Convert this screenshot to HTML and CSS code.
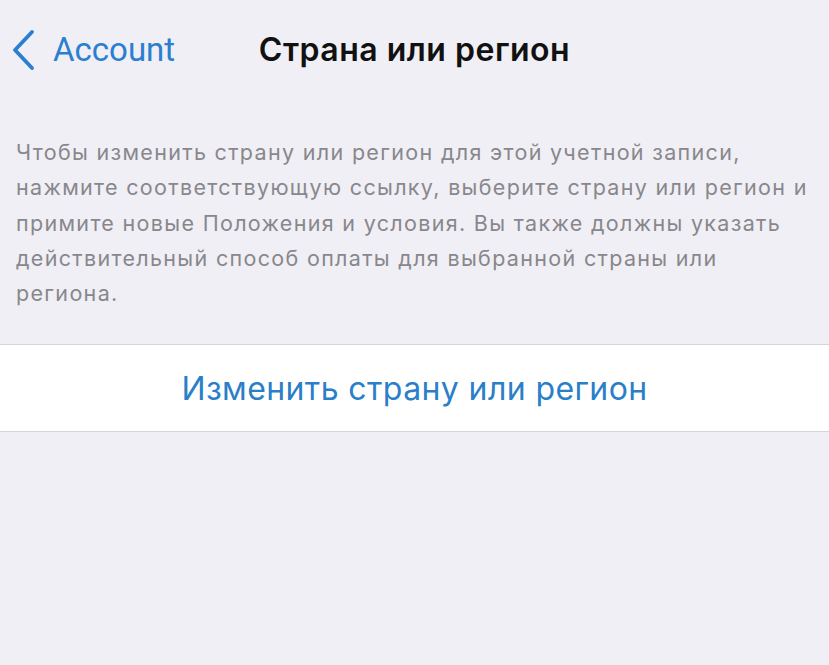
FILE: index.html
```html
<!DOCTYPE html>
<html lang="ru">
<head>
<meta charset="utf-8">
<title>Страна или регион</title>
<link rel="stylesheet" href="styles.css">
</head>
<body>
<header class="nav">
  <a class="back" href="#">
    <svg class="chev" width="26" height="42" viewBox="0 0 26 42" aria-hidden="true">
      <path d="M22 3 L5 21 L22 39" fill="none" stroke="#2a7fd0" stroke-width="3.8" stroke-linecap="round" stroke-linejoin="round"/>
    </svg>
    <span class="back-label">Account</span>
  </a>
  <h1 class="title">Страна или регион</h1>
  <div class="spacer"></div>
</header>
<main>
  <p class="info">Чтобы изменить страну или регион для этой учетной записи,<br>нажмите соответствующую ссылку, выберите страну или регион и<br>примите новые Положения и условия. Вы также должны указать<br>действительный способ оплаты для выбранной страны или<br>региона.</p>
  <div class="group">
    <a class="cell" href="#">Изменить страну или регион</a>
  </div>
</main>
</body>
</html>
```

FILE: styles.css
```css
html, body {
  margin: 0;
  padding: 0;
  background: #f0eff5;
  height: 100%;
}
body {
  font-family: Inter, Roboto, "Noto Sans", "DejaVu Sans", sans-serif;
  width: 829px;
  height: 665px;
  overflow: hidden;
}
.nav {
  display: grid;
  grid-template-columns: 1fr auto 1fr;
  align-items: center;
  height: 96px;
  padding-top: 4px;
  box-sizing: border-box;
}
.back {
  display: flex;
  align-items: center;
  gap: 17px;
  padding-left: 10px;
  text-decoration: none;
  color: #2a7fd0;
}
.chev {
  display: block;
}
.back-label {
  font-family: Roboto, sans-serif;
  font-size: 33px;
  line-height: 40px;
}
.title {
  margin: 0;
  font-size: 32px;
  font-weight: 600;
  color: #111;
  line-height: 40px;
  letter-spacing: 0.5px;
}
.info {
  margin: 39px 0 33px;
  padding: 0 16px;
  font-size: 21.5px;
  line-height: 35.3px;
  color: #88878c;
  letter-spacing: 1.32px;
}
.group {
  background: #fff;
  border-top: 1px solid #d3d3d8;
  border-bottom: 1px solid #d3d3d8;
}
.cell {
  display: flex;
  justify-content: center;
  align-items: center;
  height: 86px;
  font-size: 32px;
  color: #2a7fc8;
  text-decoration: none;
  letter-spacing: 0.4px;
}
```
